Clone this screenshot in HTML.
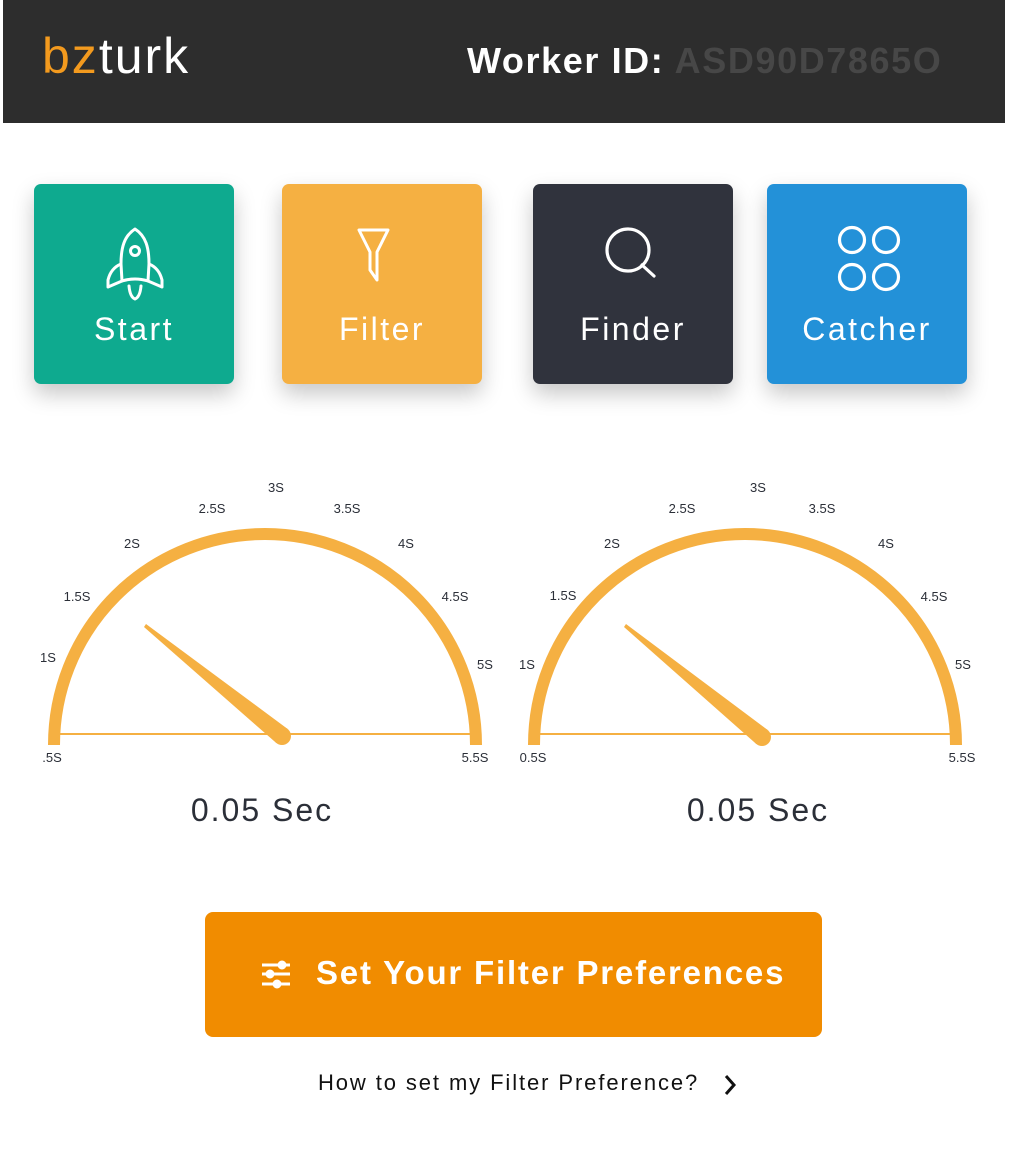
<!DOCTYPE html>
<html><head><meta charset="utf-8"><style>
*{margin:0;padding:0;box-sizing:border-box}
body{width:1021px;height:1153px;background:#fff;position:relative;font-family:"Liberation Sans",sans-serif;overflow:hidden}
.hdr{position:absolute;left:3px;top:0;width:1002px;height:123px;background:#2d2d2d}
.logo{position:absolute;left:42px;top:30px;font-size:50px;line-height:52px;letter-spacing:2px;color:#fff}
.logo b{color:#f39a1e;font-weight:normal}
.wid{position:absolute;left:467px;top:40px;font-size:36px;font-weight:bold;color:#fff;letter-spacing:1.6px;white-space:nowrap}
.wid span{color:#474747}
.card{position:absolute;top:184px;width:200px;height:200px;border-radius:7px;box-shadow:0 10px 22px rgba(0,0,0,.22);color:#fff;font-size:32px;letter-spacing:2.5px;text-align:center}
.card .l{position:absolute;left:0;right:0;top:127px}
.card svg{position:absolute;left:0;top:0}
.val{position:absolute;top:792px;font-size:32px;color:#2b2f38;width:300px;text-align:center;letter-spacing:2px}
.btn{position:absolute;left:205px;top:912px;width:617px;height:125px;background:#f18c00;border-radius:8px}
.btn .t{position:absolute;left:111px;top:42px;font-size:33px;font-weight:bold;color:#fff;white-space:nowrap;letter-spacing:1.8px}
.help{position:absolute;left:318px;top:1070px;font-size:22px;color:#111;white-space:nowrap;letter-spacing:1.9px}
</style></head><body>
<div class="hdr"></div>
<div class="logo"><b>bz</b>turk</div>
<div class="wid">Worker ID: <span>ASD90D7865O</span></div>

<div class="card" style="left:34px;background:#0eaa8f">
<svg width="200" height="200" viewBox="0 0 200 200" fill="none" stroke="#fff" stroke-width="3" stroke-linejoin="round" stroke-linecap="round">
<path d="M101 45 C90 52 87 64 87 80 L88 97 Q101 93 114 97 L115 80 C115 64 112 52 101 45 Z"/>
<circle cx="101" cy="67" r="4.5"/>
<path d="M87 80 Q77 84 74 96 L74 103 L88 97"/><path d="M115 80 Q125 84 128 96 L128 103 L114 97"/>
<path d="M95 102 Q96 113 101 115 Q106 113 107 102"/>
</svg><div class="l">Start</div></div>

<div class="card" style="left:282px;background:#f5b042">
<svg width="200" height="200" viewBox="0 0 200 200" fill="none" stroke="#fff" stroke-width="3" stroke-linejoin="round">
<path d="M77 46 L106 46 L95 68 L95 96 L88 86 L88 68 Z"/>
</svg><div class="l">Filter</div></div>

<div class="card" style="left:533px;background:#30333d">
<svg width="200" height="200" viewBox="0 0 200 200" fill="none" stroke="#fff" stroke-width="3.2" stroke-linecap="round">
<circle cx="95" cy="66" r="21"/><path d="M109 81 L121 92"/>
</svg><div class="l">Finder</div></div>

<div class="card" style="left:767px;background:#2391d8">
<svg width="200" height="200" viewBox="0 0 200 200" fill="none" stroke="#fff" stroke-width="3.2">
<circle cx="85" cy="56" r="12.5"/><circle cx="119" cy="56" r="12.5"/><circle cx="85" cy="93" r="12.5"/><circle cx="119" cy="93" r="12.5"/>
</svg><div class="l">Catcher</div></div>

<svg style="position:absolute;left:0;top:0" width="1021" height="1153" font-family="Liberation Sans, sans-serif" font-size="13" fill="#2b2f38" text-anchor="middle">
<g fill="none" stroke="#f5b042">
<path d="M54 745 A211 211 0 0 1 476 745" stroke-width="12"/>
<line x1="60" y1="734" x2="470" y2="734" stroke-width="2"/>
<path d="M534 745 A211 211 0 0 1 956 745" stroke-width="12"/>
<line x1="540" y1="734" x2="950" y2="734" stroke-width="2"/>
</g>
<g fill="#f5b042">
<path d="M287.7 729 L146 624 L144 627 L276.3 743 Z"/><circle cx="282" cy="736" r="9"/>
<path d="M767.7 730 L626 624 L624 627 L756.3 744 Z"/><circle cx="762" cy="737" r="9"/>
</g>
<text x="52" y="762">.5S</text><text x="48" y="662">1S</text><text x="77" y="601">1.5S</text><text x="132" y="548">2S</text><text x="212" y="513">2.5S</text><text x="276" y="492">3S</text><text x="347" y="513">3.5S</text><text x="406" y="548">4S</text><text x="455" y="601">4.5S</text><text x="485" y="669">5S</text><text x="475" y="762">5.5S</text>
<text x="533" y="762">0.5S</text><text x="527" y="669">1S</text><text x="563" y="600">1.5S</text><text x="612" y="548">2S</text><text x="682" y="513">2.5S</text><text x="758" y="492">3S</text><text x="822" y="513">3.5S</text><text x="886" y="548">4S</text><text x="934" y="601">4.5S</text><text x="963" y="669">5S</text><text x="962" y="762">5.5S</text>
</svg>
<div class="val" style="left:112px">0.05 Sec</div>
<div class="val" style="left:608px">0.05 Sec</div>

<div class="btn">
<svg style="position:absolute;left:55px;top:48px" width="34" height="32" viewBox="0 0 34 32" fill="none" stroke="#fff" stroke-width="3">
<line x1="2" y1="5" x2="30" y2="5"/><line x1="2" y1="14" x2="30" y2="14"/><line x1="2" y1="24" x2="30" y2="24"/>
<circle cx="22" cy="5" r="3" fill="#fff"/><circle cx="10" cy="14" r="3" fill="#fff"/><circle cx="17" cy="24" r="3" fill="#fff"/>
</svg>
<div class="t">Set Your Filter Preferences</div></div>
<div class="help">How to set my Filter Preference?</div>
<svg style="position:absolute;left:722px;top:1074px" width="16" height="22" viewBox="0 0 16 22" fill="none" stroke="#111" stroke-width="3"><path d="M4 2 L12 11 L4 20"/></svg>
</body></html>
